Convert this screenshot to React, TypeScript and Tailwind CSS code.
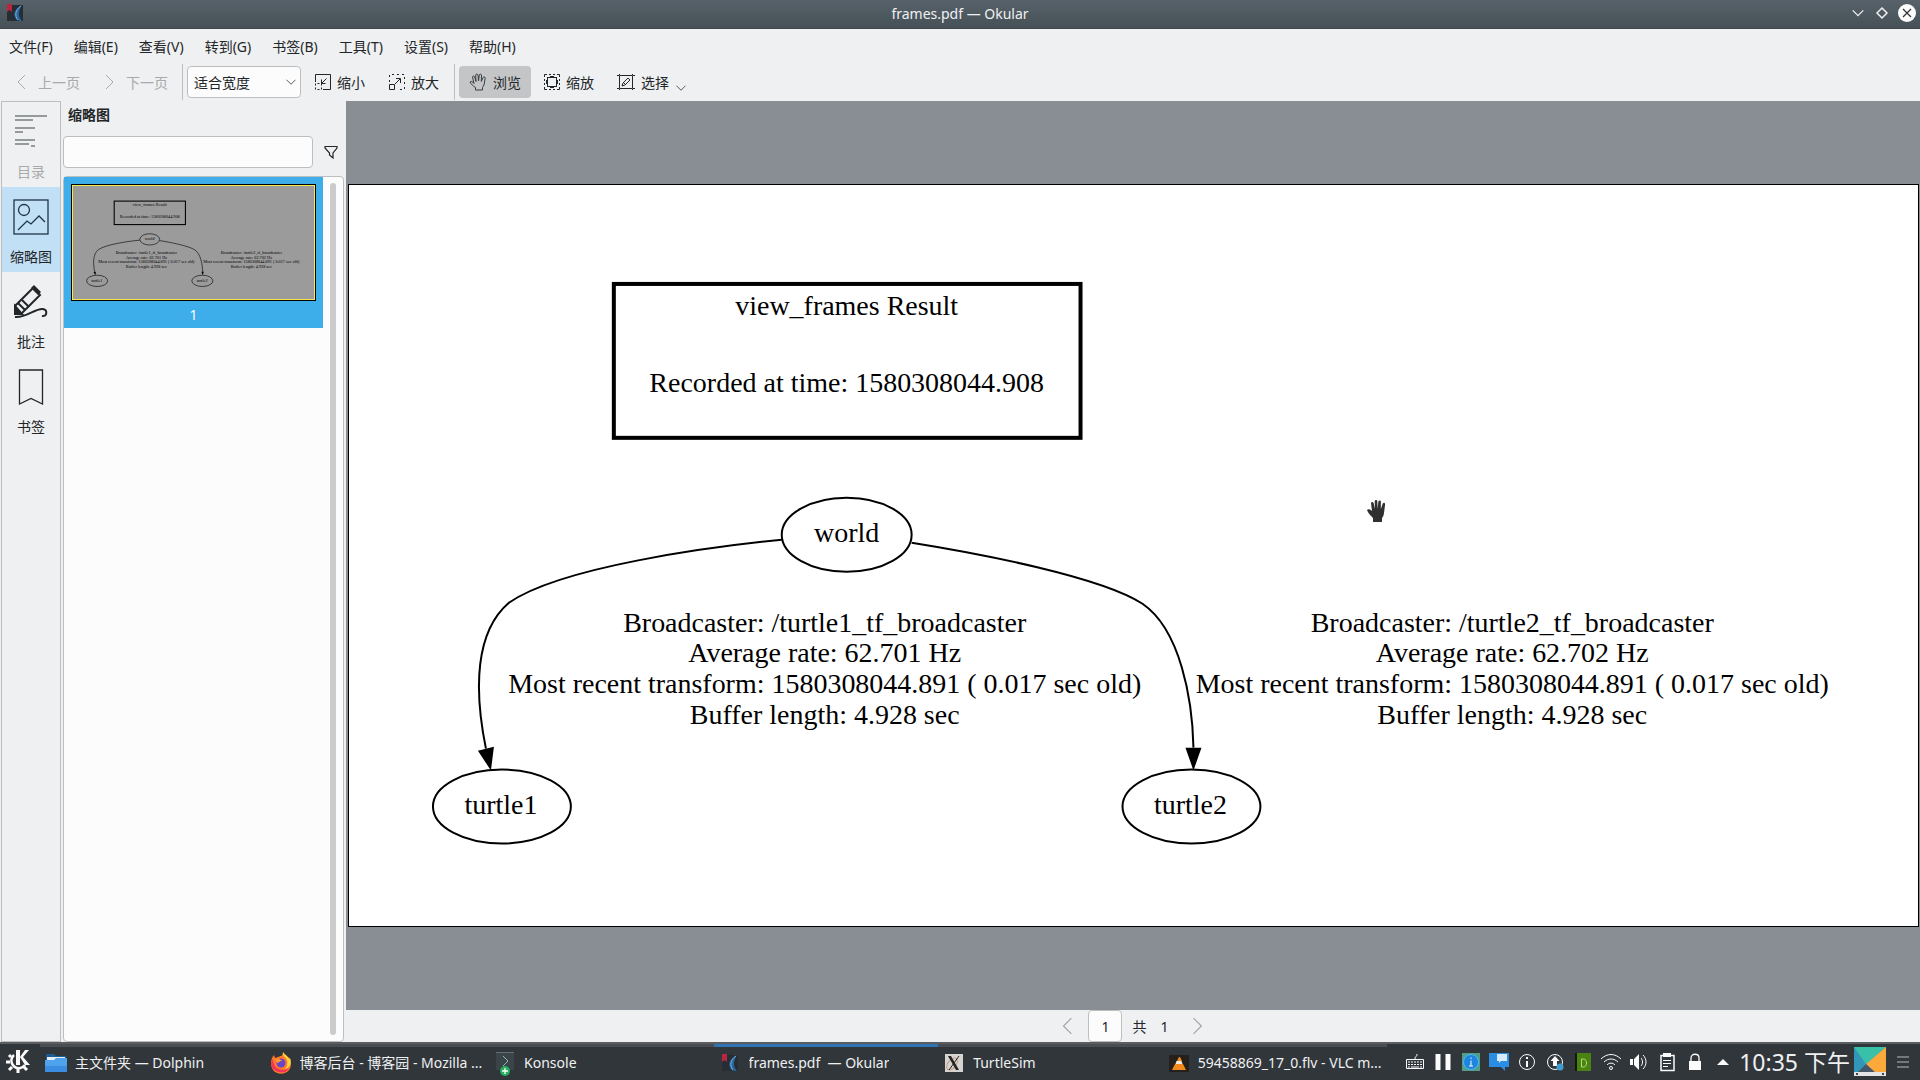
import type { ReactNode } from "react";

const menus = ["文件(F)", "编辑(E)", "查看(V)", "转到(G)", "书签(B)", "工具(T)", "设置(S)", "帮助(H)"];

function OkularIcon({ className }: { className: string }) {
  return (
    <svg viewBox="0 0 18 18" className={className} aria-hidden="true">
      <rect x="1" y="1" width="16" height="16" fill="#262d33" />
      <path d="M1 0h5v8L3.5 6 1 8z" fill="#b8263f" />
      <path d="M16 1C10 4 7 9 9 13c1 3 3 4 7 4-4-4-4-10 0-16z" fill="#2a669c" />
      <path d="M15 2C9 6 8.500 12 12 16" fill="none" stroke="#6fb0e0" />
    </svg>
  );
}

function HandIcon() {
  return (
    <svg viewBox="0 0 18 18" className="h-[18px] w-[18px]" fill="none" stroke="#3b3f42" aria-hidden="true">
      <path d="M6.5 17v-2.5C4 13 2 11 1 9c1-1.200 2.500-.4 4 1.500L3.500 4c.2-1.300 1.800-1.300 2.200 0L7 8.500 6.700 2c.2-1.300 2-1.300 2.300 0l.5 6 .8-6c.3-1.200 2-1 2.200 0L12.300 8.500 14 4.500c.5-1 2.300-.6 2.200.5l-1 6c-.3 1.500-1 2.500-1.700 3.500V17z" />
    </svg>
  );
}

function ZoomOutIcon() {
  return (
    <svg viewBox="0 0 16 16" className="h-4 w-4" fill="none" stroke="#232629" aria-hidden="true">
      <path d="M.5 8V.5h15v15H8M11.5 4.500l-5 5M6.500 5.500v4h4" />
      <path d="M.5 9.500v6h6v-6z" strokeDasharray="2 2" />
    </svg>
  );
}

function ZoomInIcon() {
  return (
    <svg viewBox="0 0 16 16" className="h-4 w-4" fill="none" stroke="#232629" aria-hidden="true">
      <path d="M.5 10.500h5v5h-5zM6 10l5-5M7 4.500h4.500v4.500" />
      <path d="M.5 8V.5h15v15H8" strokeDasharray="2 3" />
    </svg>
  );
}

function ZoomAreaIcon() {
  return (
    <svg viewBox="0 0 16 16" className="h-4 w-4" fill="none" stroke="#232629" aria-hidden="true">
      <rect x="3.5" y="3.5" width="9" height="9" />
      <path d="M6 2.500h4M6 13.500h4M2.500 6v4M13.500 6v4" />
      <path d="M.5 3V.5H3M13 .5h2.500V3M15.500 13v2.500H13M3 15.500H.5V13M5 .5h2M9 .5h2M5 15.500h2M9 15.500h2M.5 5v2M.5 9v2M15.500 5v2M15.500 9v2" />
    </svg>
  );
}

function SelectIcon() {
  return (
    <svg viewBox="0 0 18 16" className="h-4 w-[18px]" fill="none" stroke="#232629" aria-hidden="true">
      <path d="M2.500 1.500h13v13h-13zM0 1.500h2M16 1.500h2M0 14.500h2M16 14.500h2M2.500 0v1M15.500 0v1M2.500 15v1M15.500 15v1" />
      <path d="m5 12 1-3 5-5 2 2-5 5zM6.500 8.500l2 2" />
    </svg>
  );
}

function Chevron({ dir, className }: { dir: "left" | "right" | "down"; className: string }) {
  const d = { left: "M11 1 4 8l7 7", right: "m4 1 7 7-7 7", down: "m2 5 6 6 6-6" }[dir];
  return (
    <svg viewBox="0 0 16 16" className={className} fill="none" stroke="currentColor" aria-hidden="true">
      <path d={d} />
    </svg>
  );
}

/** The tf tree on the PDF page, shared by the page view and its thumbnail. */
function FrameGraph({ className, title, line = 2, frame = 4 }: { className: string; title: string; line?: number; frame?: number }) {
  return (
    <svg viewBox="0 0 1570 741" className={className} role="img" aria-label={title}>
      <g fill="none" stroke="#000" strokeWidth={line}>
        <rect x="265" y="99" width="467" height="154" strokeWidth={frame} />
        <ellipse cx="498" cy="350" rx="65" ry="37" />
        <ellipse cx="153" cy="622" rx="69" ry="37" />
        <ellipse cx="843" cy="622" rx="69" ry="37" />
        <path d="M433 355C362 362 212 382 160 418C126 447 125 505 137 564" />
        <path d="M563 358C632 369 752 392 794 419C832 445 844 515 845 563" />
      </g>
      <path d="M129 566 145 562 142 586zM837 563h16l-8 23z" />
      <g fontFamily='"Liberation Serif", serif' fontSize="28" textAnchor="middle">
        <text x="498" y="130">view_frames Result</text>
        <text x="498" y="207">Recorded at time: 1580308044.908</text>
        <text x="498" y="357">world</text>
        <text x="152" y="629">turtle1</text>
        <text x="842" y="629">turtle2</text>
        <text x="476" y="447">Broadcaster: /turtle1_tf_broadcaster</text>
        <text x="476" y="477">Average rate: 62.701 Hz</text>
        <text x="476" y="508">Most recent transform: 1580308044.891 ( 0.017 sec old)</text>
        <text x="476" y="539">Buffer length: 4.928 sec</text>
        <text x="1164" y="447">Broadcaster: /turtle2_tf_broadcaster</text>
        <text x="1164" y="477">Average rate: 62.702 Hz</text>
        <text x="1164" y="508">Most recent transform: 1580308044.891 ( 0.017 sec old)</text>
        <text x="1164" y="539">Buffer length: 4.928 sec</text>
      </g>
    </svg>
  );
}

function TitleBar() {
  return (
    <header className="flex h-[29px] shrink-0 items-center border-b border-[#42474b] bg-linear-to-b from-[#57626a] to-[#465057] px-1.5 pb-0.5 text-[#eff0f1]">
      <div className="flex flex-1">
        <OkularIcon className="h-[18px] w-[18px]" />
      </div>
      <h1 className="text-[14px]">frames.pdf — Okular</h1>
      <div className="flex flex-1 items-center justify-end gap-2">
        <button aria-label="最小化" className="flex h-4 w-4 items-center justify-center">
          <Chevron dir="down" className="h-3.5 w-3.5 stroke-[1.5]" />
        </button>
        <button aria-label="最大化" className="flex h-4 w-4 items-center justify-center">
          <svg viewBox="0 0 14 14" className="h-3.5 w-3.5" fill="none" stroke="currentColor" strokeWidth="1.5">
            <path d="M7 2 12 7 7 12 2 7z" />
          </svg>
        </button>
        <button aria-label="关闭" className="-mr-0.5 flex h-[18px] w-[18px] items-center justify-center rounded-full bg-[#fcfcfc] text-[#31363b]">
          <svg viewBox="0 0 10 10" className="h-2.5 w-2.5" fill="none" stroke="currentColor" strokeWidth="1.3">
            <path d="m1 1 8 8M9 1 1 9" />
          </svg>
        </button>
      </div>
    </header>
  );
}

function ToolButton({ icon, children, active }: { icon: ReactNode; children: ReactNode; active?: boolean }) {
  return (
    <button
      className={
        active
          ? "flex h-8 w-[72px] items-center justify-center gap-1.5 rounded-sm bg-[#c3c5c6]"
          : "flex h-8 w-[72px] items-center justify-center gap-1.5"
      }
    >
      {icon}
      {children}
    </button>
  );
}

function Toolbar() {
  return (
    <div className="flex h-[38px] items-center">
      <button className="flex w-[86px] items-center gap-2 pl-3.5 text-[#a8aaab]">
        <Chevron dir="left" className="h-4 w-4" />
        上一页
      </button>
      <button className="flex w-24 items-center gap-2 pl-4 text-[#a8aaab]">
        <Chevron dir="right" className="h-4 w-4" />
        下一页
      </button>
      <div className="h-9 border-l border-[#bcbec0]" />
      <div className="relative ml-1">
        <select aria-label="缩放" className="h-8 w-[114px] appearance-none rounded-sm border border-[#bcbec0] bg-[#fcfcfc] pl-1.5">
          <option>适合宽度</option>
        </select>
        <Chevron dir="down" className="pointer-events-none absolute top-2.5 right-1 h-3 w-3" />
      </div>
      <div className="ml-[3px] flex gap-[2px]">
        <ToolButton icon={<ZoomOutIcon />}>缩小</ToolButton>
        <ToolButton icon={<ZoomInIcon />}>放大</ToolButton>
      </div>
      <div className="ml-1 h-9 border-l border-[#bcbec0]" />
      <div className="ml-1 flex gap-[2px]">
        <ToolButton active icon={<HandIcon />}>浏览</ToolButton>
        <ToolButton icon={<ZoomAreaIcon />}>缩放</ToolButton>
        <ToolButton icon={<SelectIcon />}>选择</ToolButton>
      </div>
      <button aria-label="选择工具" className="-ml-1 pt-3">
        <Chevron dir="down" className="h-3 w-3" />
      </button>
    </div>
  );
}

function SideTab({ icon, label, state }: { icon: ReactNode; label: string; state?: "active" | "disabled" }) {
  const tone =
    state === "active" ? "bg-[#c2e0f5]" : state === "disabled" ? "text-[#a8aaab]" : "";
  return (
    <button className={`flex h-[85px] flex-col items-center gap-3 pt-3 ${tone}`}>
      {icon}
      <span className="leading-5">{label}</span>
    </button>
  );
}

function SideTabs() {
  return (
    <nav className="ml-px flex w-[60px] shrink-0 flex-col border border-[#bcbec0]">
      <SideTab
        state="disabled"
        label="目录"
        icon={
          <svg viewBox="0 0 36 36" className="h-9 w-9" stroke="#7b7d7e" strokeWidth="1.5" aria-hidden="true">
            <path d="M2 2h32M2 6h18M2 14h20M2 18h8M2 26h20M2 30h14M18 32h4" />
          </svg>
        }
      />
      <SideTab
        state="active"
        label="缩略图"
        icon={
          <svg viewBox="0 0 36 36" className="h-9 w-9" fill="none" stroke="#1f3545" strokeWidth="1.3" aria-hidden="true">
            <rect x="1" y="1" width="34" height="34" />
            <circle cx="11" cy="11" r="5.5" />
            <path d="m5 31 9-9 4 3 8-8 6 6" />
          </svg>
        }
      />
      <SideTab
        label="批注"
        icon={
          <svg viewBox="0 0 36 36" className="h-9 w-9" fill="none" stroke="#232629" strokeWidth="2" aria-hidden="true">
            <path d="m2 22 18-18 7 7L9 29H2z" />
            <path d="M2 22v8h7z" fill="#232629" />
            <path d="m5 19 7 7M9 16l7 7" />
            <path d="m18 4 3-3 7 7-3 3z" fill="#232629" stroke="none" />
            <path d="M2 33c12 1 20-9 28-8 5 1 4 8-1 7" />
          </svg>
        }
      />
      <SideTab
        label="书签"
        icon={
          <svg viewBox="0 0 36 36" className="h-9 w-9" fill="none" stroke="#232629" strokeWidth="1.3" aria-hidden="true">
            <path d="M6.500 1h23v34L18 29.500 6.500 35z" />
          </svg>
        }
      />
    </nav>
  );
}

function ThumbnailPanel() {
  return (
    <aside className="flex w-[285px] shrink-0 flex-col pl-[2px]">
      <h2 className="h-[35px] pt-1 pl-[5px] font-bold leading-5">缩略图</h2>
      <div className="flex items-center">
        <input aria-label="搜索缩略图" className="h-8 w-[250px] rounded-sm border border-[#bcbec0] bg-[#fcfcfc] px-2" />
        <button aria-label="筛选" className="ml-[11px]">
          <svg viewBox="0 0 14 14" className="h-3.5 w-3.5" fill="none" stroke="#232629" strokeWidth="1.2">
            <path d="M1 1.500h12V3L9 8v5L5.500 10V8L1 3z" />
          </svg>
        </button>
      </div>
      <div className="mt-2 flex min-h-0 w-[281px] flex-1 justify-between rounded-sm border border-[#bcbec0] bg-[#fcfcfc]">
        <div className="flex h-[151px] w-[259px] flex-col items-center gap-1 bg-[#3daee9] pt-[7px] text-[#fcfcfc]">
          <div className="w-[245px] border border-black">
            <div className="border border-[#f4e84a] bg-[#9b9b9b]">
              <FrameGraph className="block h-[113px] w-full" title="第 1 页缩略图" line={4} frame={7} />
            </div>
          </div>
          <span className="leading-5">1</span>
        </div>
        <div className="my-1.5 mr-[7px] w-1.5 rounded-full bg-[#c9cbcc]" />
      </div>
    </aside>
  );
}

function GrabCursor() {
  return (
    <svg viewBox="0 0 20 26" className="absolute top-[42%] left-[65%] h-[26px] w-5 -translate-x-0.5" fill="#303030" aria-hidden="true">
      <path d="M6 26v-4C4 20 1 17 0 14c1-1.500 3-1 5 1L4 7c.3-1.500 2-1.500 2.600 0L8 13 7.700 5c.3-1.500 2.300-1.500 2.600 0l.3 8 .8-7.500c.4-1.500 2.400-1.300 2.500.2L13.800 13l2-5.500c.8-1.300 2.500-.6 2.300 1L17 17c-.3 2.500-1 4-2 5v4z" />
    </svg>
  );
}

function PageView() {
  return (
    <main className="flex min-w-0 flex-1 flex-col">
      <div className="flex flex-1 items-center bg-[#898d94] pr-px pl-[2px]">
        <div className="relative w-full border border-black bg-white">
          <FrameGraph className="block w-full" title="view_frames Result" />
          <GrabCursor />
        </div>
      </div>
      <footer className="flex h-8 items-center justify-center">
        <button aria-label="上一页" className="text-[#a0a2a3]">
          <Chevron dir="left" className="h-[18px] w-[18px]" />
        </button>
        <input aria-label="页码" defaultValue="1" className="mr-2.5 ml-[11px] h-8 w-[34px] rounded-sm border border-[#bcbec0] bg-[#fcfcfc] text-center" />
        <span className="flex gap-3.5">
          <span>共</span>
          <span>1</span>
        </span>
        <button aria-label="下一页" className="ml-5 text-[#a0a2a3]">
          <Chevron dir="right" className="h-[18px] w-[18px]" />
        </button>
      </footer>
    </main>
  );
}

function KdeIcon() {
  return (
    <svg viewBox="0 0 24 24" className="h-6 w-6" fill="none" stroke="#fcfcfc" aria-hidden="true">
      <path d="M8 6a7.500 7.500 0 1 0 11 10" strokeWidth="2.5" />
      <path d="M5 8 3 6M4 13H0M6 18l-3 3M12 20v4M18 18l3 3" strokeWidth="3" />
      <path d="M10 1h4v15h-4z" fill="#fcfcfc" stroke="none" />
      <path d="m14 8 5-7h4l-6 7 7 8h-5z" fill="#fcfcfc" stroke="none" />
    </svg>
  );
}

function FolderIcon() {
  return (
    <svg viewBox="0 0 22 20" className="h-5 w-[22px]" aria-hidden="true">
      <path d="M1 1h8l2 2h10v8H1z" fill="#1d5d93" />
      <path d="M2 4h18v6H2z" fill="#e6eef5" />
      <path d="M0 7h9l2-2h11v14H0z" fill="#4fa3ec" />
      <path d="M0 13h22v6H0z" fill="#3a8de0" />
    </svg>
  );
}

function FirefoxIcon() {
  return (
    <svg viewBox="0 0 22 22" className="h-[22px] w-[22px]" aria-hidden="true">
      <path d="M1 12C1 8 2 5 4 3l1 3 3-1c2-1 4 0 5-4 3 2 4 4 5 5l1-1c2 4 3 9 0 13-4 5-12 5-16 0-1-2-2-4-2-6z" fill="#ff7a2a" />
      <path d="M13 0c-1 4 3 5 4 8 1 4 0 7-2 9 5-1 7-6 5-11l-1 1c-1-3-4-4-6-7z" fill="#ffd43c" />
      <path d="M1 12c1 7 8 9 13 8 2 0 4-2 5-4-4 3-13 3-15-4-1-2-1-3-1-5-1 1-2 3-2 5z" fill="#f5315a" />
      <circle cx="11" cy="11" r="4.5" fill="#6a45c8" />
      <path d="M6 7c3-1 5 1 6 2-3 0-3 2-5 2z" fill="#ff9b2e" />
    </svg>
  );
}

function KonsoleIcon() {
  return (
    <svg viewBox="0 0 18 26" className="h-[26px] w-[18px]" aria-hidden="true">
      <path d="M0 2h18v18H0z" fill="#3b4449" />
      <path d="M0 2h18v1H0z" fill="#66706f" />
      <path d="m7 6 5 5-5 5" fill="none" stroke="#8fb8b0" />
      <circle cx="9" cy="21" r="5" fill="#27ae60" />
      <path d="M9 18v6M6 21h6" stroke="#fff" strokeWidth="1.3" />
    </svg>
  );
}

function XorgIcon() {
  return (
    <svg viewBox="0 0 18 18" className="h-[18px] w-[18px]" aria-hidden="true">
      <path d="M0 0h18v18H0z" fill="#d6d4d0" />
      <ellipse cx="7" cy="10" rx="7" ry="4" fill="none" stroke="#c99a7b" transform="rotate(-50 7 10)" />
      <path d="M3 2h3l8 14h-3z" fill="#222" />
      <path d="M14 2 4 16" stroke="#222" />
    </svg>
  );
}

function VlcIcon() {
  return (
    <svg viewBox="0 0 22 20" className="h-5 w-[22px]" aria-hidden="true">
      <path d="M1 2h20v17H1z" fill="#26201c" />
      <path d="m11 4-2 4h5l-2-4z" fill="#f08a1d" />
      <path d="m8.500 8-1 3h7l-1-3z" fill="#f2e9df" />
      <path d="m7 11-1 2-2 4h14l-2-4-1-2z" fill="#f08a1d" />
    </svg>
  );
}

const tasks = [
  { label: "主文件夹 — Dolphin", icon: <FolderIcon /> },
  { label: "博客后台 - 博客园 - Mozilla ...", icon: <FirefoxIcon /> },
  { label: "Konsole", icon: <KonsoleIcon /> },
  { label: "frames.pdf  — Okular", icon: <OkularIcon className="h-[18px] w-[18px]" />, active: true },
  { label: "TurtleSim", icon: <XorgIcon /> },
  { label: "59458869_17_0.flv - VLC m...", icon: <VlcIcon /> },
];

function Tray() {
  const line = { fill: "none", stroke: "#fcfcfc", viewBox: "0 0 20 20", className: "h-5 w-5", "aria-hidden": true };
  return (
    <div className="flex shrink-0 items-center gap-2">
      <svg {...line}>
        <path d="M1.500 7.500h17v9h-17zM10 7c0-4 2-1 2-5" />
        <path d="M3 10h14M3 12.500h14M3 15h2M15 15h2" strokeDasharray="2 1" />
        <path d="M6 15h8" />
      </svg>
      <svg {...line}>
        <path d="M5 2v16M15 2v16" strokeWidth="5" />
      </svg>
      <svg {...line}>
        <path d="M1 1h18v18H1z" fill="#4fa08b" stroke="none" />
        <circle cx="10" cy="10" r="7.5" fill="#1d84e0" stroke="#53b6ee" />
        <path d="M10 8.500V14M10 5.500V7M8 14h4" />
      </svg>
      <svg {...line}>
        <path d="M0 1h20v14h-4v4l-4-4H0z" fill="#2a8ee4" stroke="none" />
        <path d="M8 2h10v7h-6l-2 2V9H8z" fill="#d7ebfa" stroke="none" />
      </svg>
      <svg {...line}>
        <circle cx="10" cy="10" r="7.5" />
        <path d="M10 9v6M10 5v2" strokeWidth="2" />
      </svg>
      <svg {...line}>
        <circle cx="10" cy="10" r="7.5" />
        <path d="m10 4 4.500 5H12v5H8V9H5.500z" fill="#fcfcfc" stroke="none" />
        <circle cx="15" cy="15" r="3.5" fill="#3f9bd0" stroke="none" />
      </svg>
      <svg {...line}>
        <path d="M2 1h3v18H2z" fill="#101a08" stroke="none" />
        <path d="M4 1h14v18H4z" fill="#4b8312" stroke="none" />
        <path d="M8.500 7v8h2c4 0 4-8 0-8z" stroke="#b6e07a" />
      </svg>
      <svg {...line}>
        <path d="M0 7c6-6 14-6 20 0M3 10c4-4 10-4 14 0M6 13c2-2.500 6-2.500 8 0" />
        <circle cx="10" cy="16" r="1.5" />
      </svg>
      <svg {...line}>
        <path d="M1 7h3v6H1zM5 7l5-5v16l-5-5z" fill="#fcfcfc" stroke="none" />
        <path d="M12 6c2 2 2 6 0 8M14 3c4 4 4 10 0 14" />
      </svg>
      <svg {...line}>
        <path d="M4 3.500h13v15H4z" strokeWidth="1.5" />
        <path d="M6 1h8v4H6z" fill="#fcfcfc" stroke="none" />
        <path d="M6 8.500h8M6 11.500h8M6 14.500h5" />
      </svg>
      <svg {...line}>
        <path d="M4 9h12v9H4z" fill="#fcfcfc" stroke="none" />
        <path d="M6 9V6c0-5 8-5 8 0v3" strokeWidth="1.3" />
      </svg>
      <svg {...line}>
        <path d="m4 13 6-6 6 6z" fill="#fcfcfc" stroke="none" />
      </svg>
      <time className="-ml-0.5 text-[23px] leading-8 whitespace-nowrap">10:35 下午</time>
      <svg viewBox="0 0 32 30" className="-ml-1 h-[30px] w-8" aria-hidden="true">
        <path d="M0 0h32v28H0z" fill="#3296b8" />
        <path d="M0 0h32L12 17z" fill="#39c0a8" />
        <path d="M32 0v28H22L12 17z" fill="#fba93a" />
        <path d="m12 17 10 9H3z" fill="#44566a" />
        <path d="M0 25h32v4H0z" fill="#e4e4e4" />
        <path d="M2 26h2v2H2zM28 26h2v2h-2z" fill="#444" />
      </svg>
      <svg viewBox="0 0 14 14" className="ml-0.5 h-3.5 w-3.5" stroke="#8b8f92" strokeWidth="1.5" aria-hidden="true">
        <path d="M1 2h12M1 7h12M1 12h12" />
      </svg>
    </div>
  );
}

function Taskbar() {
  return (
    <footer className="flex h-[38px] shrink-0 items-center border-t-2 border-[#5a5e61] bg-[#31363b] pr-2.5 text-[#eff0f1]">
      <button aria-label="应用程序菜单" className="w-10 pb-0.5 pl-1.5">
        <KdeIcon />
      </button>
      <div className="flex min-w-0 flex-1 self-stretch">
        {tasks.map((t) => (
          <button
            key={t.label}
            className={`flex min-w-0 flex-1 items-center gap-2 border-t-[3px] pb-0.5 pl-[5px] text-[14px] ${t.active ? "border-[#2f73b5]" : "border-[#4a4e52]"}`}
          >
            <span className="flex w-[22px] shrink-0 justify-center">{t.icon}</span>
            <span className="truncate whitespace-pre">{t.label}</span>
          </button>
        ))}
      </div>
      <div className="ml-[18px]">
        <Tray />
      </div>
    </footer>
  );
}

export default function App() {
  return (
    <div className="flex min-h-screen flex-col bg-[#eff0f1] font-['Noto_Sans','Noto_Sans_CJK_SC',sans-serif] text-[14px] text-[#232629]">
      <TitleBar />
      <nav className="flex h-[34px] items-center gap-[21px] px-[9px]">
        {menus.map((m) => (
          <button key={m}>{m}</button>
        ))}
      </nav>
      <Toolbar />
      <div className="flex flex-1">
        <SideTabs />
        <ThumbnailPanel />
        <PageView />
      </div>
      <Taskbar />
    </div>
  );
}
